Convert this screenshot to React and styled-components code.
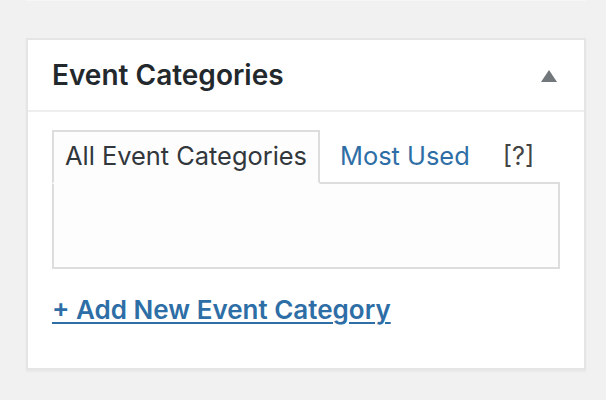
import React from "react";
import styled, { createGlobalStyle } from "styled-components";

const Global = createGlobalStyle`
  html, body { margin: 0; padding: 0; background: #f1f1f1; }
  body { font-family: Inter, "Noto Sans", sans-serif; }
`;

const Page = styled.div`
  width: 606px;
  height: 400px;
  padding: 0 20px 0 26px;
  box-sizing: border-box;
  overflow: hidden;
`;

const PrevEdge = styled.div`
  width: 560px;
  height: 1px;
  background: #f6f6f6;
  margin-bottom: 37px;
`;

const Postbox = styled.section`
  width: 560px;
  height: 332px;
  box-sizing: border-box;
  background: #fff;
  border: 2px solid #e5e5e5;
  box-shadow: 0 2px 2px rgba(0, 0, 0, 0.04);
  display: flex;
  flex-direction: column;
`;

const Header = styled.div`
  height: 70px;
  border-bottom: 2px solid #eee;
  display: flex;
  align-items: center;
  justify-content: space-between;
  padding: 0 27px 0 24px;
`;

const Title = styled.h2`
  margin: 0;
  font-size: 28px;
  font-weight: 600;
  color: #23282d;
  white-space: nowrap;
`;

const Toggle = styled.span`
  width: 0;
  height: 0;
  border-left: 8px solid transparent;
  border-right: 8px solid transparent;
  border-bottom: 12px solid #72777c;
  margin-top: 2px;
`;

const Inside = styled.div`
  padding: 18px 24px 0 24px;
  display: flex;
  flex-direction: column;
`;

const Tabs = styled.ul`
  list-style: none;
  margin: 0 0 -2px 0;
  padding: 0;
  display: flex;
  align-items: flex-start;
  position: relative;
  z-index: 1;
`;

const Tab = styled.li`
  box-sizing: border-box;
  height: 54px;
  padding: 0 11px 4px;
  display: flex;
  align-items: center;
  white-space: nowrap;
  font-size: 25.4px;
  border: 2px solid ${(p) => (p.$active ? "#ddd" : "transparent")};
  border-bottom-color: ${(p) => (p.$active ? "#fdfdfd" : "transparent")};
  background: ${(p) => (p.$active ? "#fdfdfd" : "transparent")};
  color: ${(p) => (p.$active ? "#32373c" : p.$help ? "#444" : "#2e6ea6")};
  margin-left: ${(p) => p.$gap || 0}px;
  flex-shrink: 0;
`;

const Panel = styled.div`
  box-sizing: border-box;
  height: 87px;
  border: 2px solid #ddd;
  background: #fdfdfd;
`;

const AddLink = styled.a`
  margin-top: 23px;
  align-self: flex-start;
  font-size: 26px;
  font-weight: 600;
  color: #2e6ea6;
  text-decoration: underline;
  text-decoration-thickness: 2px;
  text-underline-offset: 3px;
  line-height: 36px;
  white-space: nowrap;
  cursor: pointer;
`;

export default function App() {
  return (
    <>
      <Global />
      <Page>
        <PrevEdge />
        <Postbox>
          <Header>
            <Title>Event Categories</Title>
            <Toggle />
          </Header>
          <Inside>
            <Tabs>
              <Tab $active>All Event Categories</Tab>
              <Tab $gap={7}>Most Used</Tab>
              <Tab $help $gap={7}>[?]</Tab>
            </Tabs>
            <Panel />
            <AddLink>+ Add New Event Category</AddLink>
          </Inside>
        </Postbox>
      </Page>
    </>
  );
}
